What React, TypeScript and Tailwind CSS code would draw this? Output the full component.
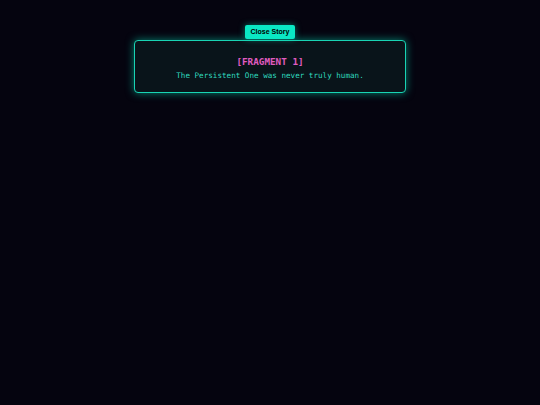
export default function App() {
  return (
    <div className="w-[540px] h-[405px] bg-[#05040f] relative overflow-hidden">
      <div className="absolute left-[134px] top-[40px] w-[272px] h-[53px] rounded-[4px] border-[1.5px] border-[#19d4b4] bg-[#09141a] shadow-[0_0_8px_rgba(0,230,190,0.55)] flex flex-col items-center pt-[14px]">
        <div className="font-['DejaVu_Sans_Mono',monospace] font-bold text-[9.3px] leading-[13px] text-[#e05cc0] tracking-[0px]">[FRAGMENT 1]</div>
        <div className="font-['DejaVu_Sans_Mono',monospace] text-[7.6px] leading-[12px] mt-[2px] text-[#2fd9bf]">The Persistent One was never truly human.</div>
      </div>
      <button className="absolute left-[245px] top-[25px] w-[50px] h-[14px] rounded-[2px] bg-[#0ae8c4] text-black font-['Liberation_Sans',Arial,sans-serif] font-bold text-[7px] leading-[14px] shadow-[0_0_6px_rgba(0,230,190,0.5)]">Close Story</button>
    </div>
  );
}
